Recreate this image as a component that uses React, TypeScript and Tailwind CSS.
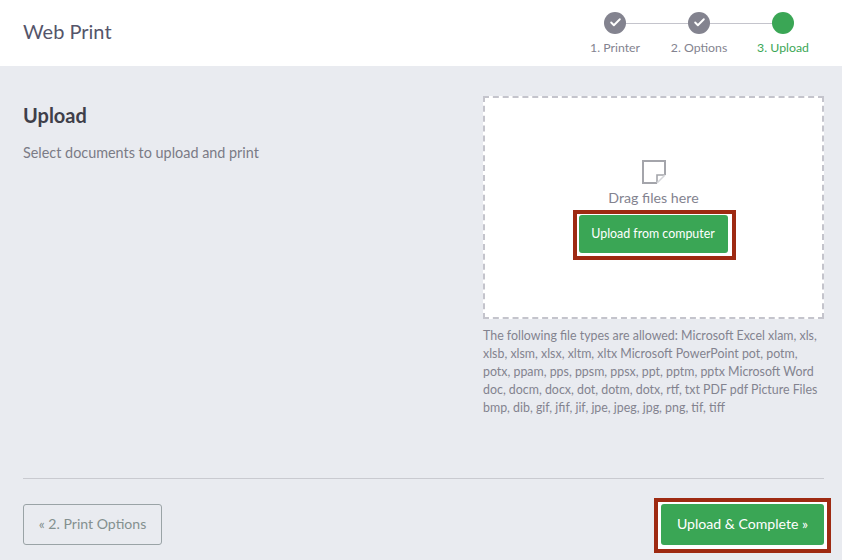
import { Check } from 'lucide-react';

const fileTypes =
  'The following file types are allowed: Microsoft Excel xlam, xls, xlsb, xlsm, xlsx, xltm, xltx Microsoft PowerPoint pot, potm, potx, ppam, pps, ppsm, ppsx, ppt, pptm, pptx Microsoft Word doc, docm, docx, dot, dotm, dotx, rtf, txt PDF pdf Picture Files bmp, dib, gif, jfif, jif, jpe, jpeg, jpg, png, tif, tiff';

function Step({ label, active }: { label: string; active?: boolean }) {
  return (
    <div className="flex w-[84px] flex-col items-center">
      <div
        className={`flex h-[22px] w-[22px] items-center justify-center rounded-full ${active ? 'bg-[#3aa655]' : 'bg-[#83838f]'}`}
      >
        {!active && <Check className="h-[13px] w-[13px] text-white" strokeWidth={3.5} />}
      </div>
      <span className={`mt-[6px] text-[12.3px] leading-[16px] ${active ? 'text-[#3aa655]' : 'text-[#83838f]'}`}>{label}</span>
    </div>
  );
}

export default function App() {
  return (
    <div className="flex h-[560px] w-[842px] flex-col overflow-hidden bg-[#e9ebf0] font-['Lato','Open_Sans',sans-serif]">
      <header className="flex h-[66px] items-center justify-between bg-white pl-[23px] pr-[17px]">
        <h1 className="-mt-[5px] text-[20px] text-[#55556a]">Web Print</h1>
        <div className="relative flex pt-[1px]">
          <div className="absolute left-[42px] right-[42px] top-[12px] h-px bg-[#c4c4cc]" />
          <div className="relative flex">
            <Step label="1. Printer" />
            <Step label="2. Options" />
            <Step label="3. Upload" active />
          </div>
        </div>
      </header>
      <main className="flex flex-1 flex-col pl-[23px] pr-[18px]">
        <div className="flex flex-1 justify-between pt-[30px]">
          <div>
            <h2 className="text-[20px] font-bold leading-[38px] text-[#3f3f4a]">Upload</h2>
            <p className="mt-[8px] text-[14.4px] text-[#7b7b86]">Select documents to upload and print</p>
          </div>
          <div className="w-[341px]">
            <div className="flex h-[223px] flex-col items-center border-2 border-dashed border-[#c4c4cc] bg-white pt-[62px]">
              <svg width="24" height="24" viewBox="0 0 24 24" fill="none" stroke="#a4a5ab" strokeWidth="2">
                <path d="M23 15V1H1v22h14" />
                <path d="M23 15h-8v8" strokeWidth="1.6" />
                <path d="M23 15l-8 8" stroke="#d5d6da" strokeWidth="1.6" />
              </svg>
              <span className="mt-[3px] text-[14.2px] text-[#83838f]">Drag files here</span>
              <div className="ml-[1px] mt-[2px] border-4 border-[#9e2a12] bg-white pb-[3px] pl-[2px] pr-[4px] pt-[1px]">
                <button className="h-[38px] w-[149px] rounded-[3px] bg-[#3aa655] text-[12.4px] text-white">
                  Upload from computer
                </button>
              </div>
            </div>
            <p className="mt-[8px] text-[12.4px] leading-[18px] text-[#83838f]">{fileTypes}</p>
          </div>
        </div>
        <div className="flex h-[82px] items-center justify-between border-t border-[#c9cad0] pt-[12px]">
          <button className="mb-[2px] h-[41px] w-[139px] rounded-[3px] border border-[#9aa3a6] pb-[2px] text-[14.1px] text-[#84908f]">
            « 2. Print Options
          </button>
          <div className="-mr-[7px] border-4 border-[#9e2a12] bg-white pb-[4px] pl-[3px] pr-[3px] pt-[2px]">
            <button className="h-[41px] w-[163px] rounded-[3px] bg-[#3aa655] pb-[2px] text-[14.1px] text-white">
              Upload &amp; Complete »
            </button>
          </div>
        </div>
      </main>
    </div>
  );
}
